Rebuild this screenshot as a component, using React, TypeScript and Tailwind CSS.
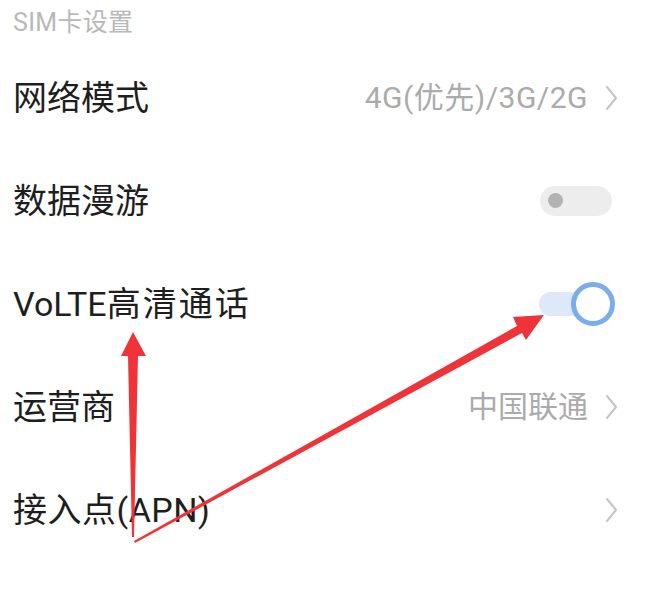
import React from "react";

const font = { fontFamily: 'Roboto, "Noto Sans CJK SC", sans-serif' };

function Chevron() {
  return (
    <svg width="13" height="26" viewBox="0 0 13 26" className="shrink-0">
      <path d="M2 2 L11 13 L2 24" fill="none" stroke="#c4c4c4" strokeWidth="2" strokeLinecap="round" strokeLinejoin="round" />
    </svg>
  );
}

function Row({ label, children }: { label: React.ReactNode; children?: React.ReactNode }) {
  return (
    <div className="flex h-[103px] items-center justify-between pl-[13px] pr-[32px]">
      <span className="text-[34px] leading-none text-[#1e1e1e]">{label}</span>
      <div className="flex items-center gap-[17px]">{children}</div>
    </div>
  );
}

export default function App() {
  return (
    <div className="relative h-[606px] w-[650px] overflow-hidden bg-white" style={font}>
      <div className="flex h-[46px] items-center pl-[13px] pb-[2px]">
        <span className="text-[25px] leading-none tracking-[0.3px] text-[#b8b8b8]">SIM卡设置</span>
      </div>
      <Row label="网络模式">
        <span className="text-[30px] leading-none tracking-[0.5px] text-[#ababab]">4G(优先)/3G/2G</span>
        <Chevron />
      </Row>
      <Row label="数据漫游">
        <div className="mr-[6px] flex h-[30px] w-[72px] items-center rounded-full bg-[#ededed] pl-[8px]">
          <div className="h-[15px] w-[15px] rounded-full bg-[#b3b3b3]" />
        </div>
      </Row>
      <Row
        label={
          <>
            VoLTE<span className="tracking-[2px]">高清通话</span>
          </>
        }
      >
        <div className="relative mr-[3px] h-[44px] w-[76px]">
          <div className="absolute left-0 top-[10px] h-[24px] w-[60px] rounded-full bg-[#dde9f8]" />
          <div className="absolute right-0 top-0 h-[44px] w-[44px] rounded-full border-[5px] border-[#7aade9] bg-white" />
        </div>
      </Row>
      <Row label="运营商">
        <span className="text-[30px] leading-none text-[#ababab]">中国联通</span>
        <Chevron />
      </Row>
      <Row label={<span className="tracking-[0.5px]">接入点(APN)</span>}>
        <Chevron />
      </Row>

      <svg className="pointer-events-none absolute left-0 top-0" width="650" height="606" viewBox="0 0 650 606">
        <polygon points="133,332 146,356 138,356 134,537 132,537 128,356 121,356" fill="#ee3438" />
        <polygon points="544,315 526,340 522,333 135,543 134,541 517,326 513,317" fill="#ee3438" />
      </svg>
    </div>
  );
}
